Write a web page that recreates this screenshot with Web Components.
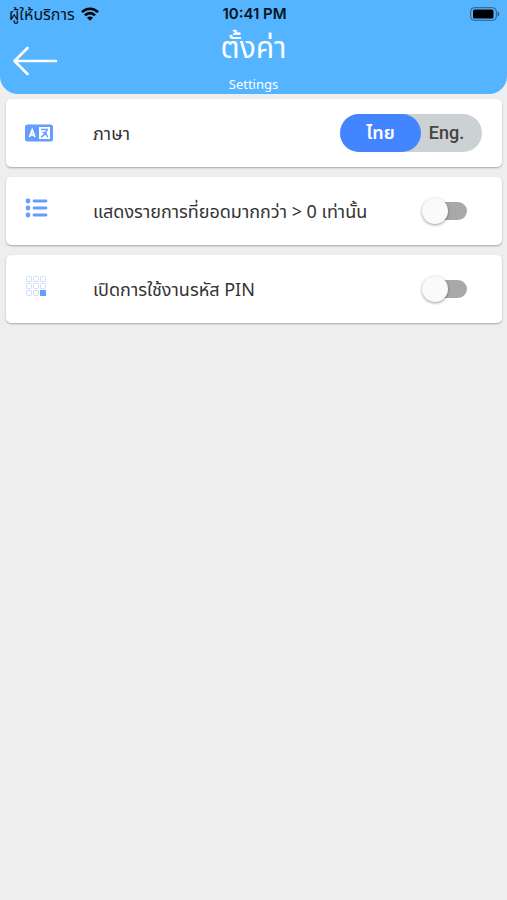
<!DOCTYPE html>
<html lang="th">
<head>
<meta charset="utf-8">
<meta name="viewport" content="width=device-width, initial-scale=1">
<title>ตั้งค่า</title>
<style>
html { background: #eee; }
body { margin: 0; font-family: "Noto Sans", "Noto Sans Thai", sans-serif; color: #333; }
</style>
</head>
<body>
<settings-page></settings-page>
<script>
const define = (name, html, setup) => {
  const template = document.createElement('template');
  template.innerHTML = html;
  customElements.define(name, class extends HTMLElement {
    constructor() {
      super();
      this.attachShadow({ mode: 'open' }).append(template.content.cloneNode(true));
    }
    connectedCallback() { if (setup) setup(this); }
  });
};

define('status-bar', `
<style>
:host { display: grid; grid-template-columns: 1fr auto 1fr; align-items: center; height: 28px; padding: 0 7px 0 9px; color: #07131c; font-size: 16px; line-height: 28px; }
.carrier { display: flex; align-items: center; gap: 6px; }
.time { font: 600 15px/28px Inter, sans-serif; }
.battery { justify-self: end; }
svg { display: block; }
</style>
<span class="carrier"><span>ผู้ให้บริการ</span>
<svg width="18" height="14" viewBox="0 0 18 14" fill="none" stroke="#000" stroke-width="2.6"><path d="M1 5.200C5.500.6 12.500.6 17 5.200M4 8.300c2.800-2.900 7.200-2.900 10 0"/><path d="M9 13.800 6 10.800c1.700-1.700 4.300-1.700 6 0z" fill="#000" stroke="none"/></svg></span>
<span class="time">10:41 PM</span>
<svg class="battery" width="30" height="14" viewBox="0 0 30 14"><rect x=".7" y=".7" width="25.600" height="12.600" rx="3.500" fill="none" stroke="#2b5d84" stroke-width="1"/><rect x="3" y="2.500" width="20.500" height="9" rx="1.500" fill="#000"/><path d="M27.500 4.500c2.500.8 2.500 4.200 0 5z" fill="#2b6593"/></svg>`);

define('app-header', `
<style>
:host { display: block; background: #54b4ff; border-radius: 0 0 18px 18px; color: #fff; }
.bar { display: grid; grid-template-columns: 60px 1fr 60px; height: 66px; }
button { align-self: center; margin: 0; padding: 0 0 0 12px; border: 0; background: none; }
svg { display: block; }
.titles { display: flex; flex-direction: column; align-items: center; gap: 8px; }
h1 { margin: 0; font-size: 30px; font-weight: 400; line-height: 38px; }
p { margin: 0; font-size: 13px; line-height: 20px; }
</style>
<status-bar></status-bar>
<div class="bar">
<button aria-label="Back"><svg width="46" height="30" viewBox="0 0 46 30" fill="none" stroke="#fff" stroke-width="2.600" stroke-linecap="round" stroke-linejoin="round"><path d="M15.500 2 2.500 15l13 13M2.500 15H44"/></svg></button>
<div class="titles"><h1><slot name="title"></slot></h1><p><slot name="subtitle"></slot></p></div>
</div>`);

define('setting-row', `
<style>
:host { display: grid; grid-template-columns: 68px 1fr auto; align-items: center; box-sizing: border-box; height: 68px; padding: 0 20px 0 19px; background: #fff; border-radius: 5px; box-shadow: 0 1px 2px rgba(0,0,0,.3); }
.label { font-size: 18px; line-height: 28px; white-space: nowrap; }
.icon { display: flex; }
</style>
<span class="icon"><slot name="icon"></slot></span>
<span class="label" id="label"><slot></slot></span>
<slot name="control"></slot>`);

define('toggle-switch', `
<style>
:host { display: flex; padding-right: 15px; }
input { appearance: none; position: relative; width: 46px; height: 28px; margin: 0; cursor: pointer; }
input::before { content: ""; position: absolute; inset: 5px 0 5px 8px; border-radius: 9px; background: #a8a8a8; }
input::after { content: ""; position: absolute; left: 1px; top: 1px; width: 26px; height: 26px; border-radius: 50%; background: #fafafa; box-shadow: 0 1px 3px rgba(0,0,0,.4); }
input:checked::before { background: #8fb6ff; }
input:checked::after { left: 20px; background: #4285ff; }
</style>
<input type="checkbox" role="switch">`,
el => el.shadowRoot.querySelector('input').setAttribute('aria-label', el.getAttribute('label')));

define('language-toggle', `
<style>
:host { display: block; }
fieldset { display: flex; width: 142px; height: 38px; margin: 0; padding: 0; border: 0; border-radius: 19px; background: #ccd1d3; }
input { appearance: none; position: absolute; margin: 0; }
label { display: flex; align-items: center; justify-content: center; flex: 1; padding-right: 10px; border-radius: 19px; color: #444; font-family: Roboto, "Noto Sans Thai", sans-serif; font-size: 18px; font-weight: 500; line-height: 38px; cursor: pointer; }
label:has(:checked) { flex: 0 0 81px; padding: 0; box-sizing: border-box; background: #4285ff; color: #fff; font-weight: 600; }
</style>
<fieldset aria-label="ภาษา">
<label><input type="radio" name="language" checked>ไทย</label>
<label><input type="radio" name="language">Eng.</label>
</fieldset>`);

define('setting-icon', `
<style>
:host { display: flex; }
svg { display: none; }
:host([name=language]) .language, :host([name=list]) .list, :host([name=pin]) .pin { display: block; }
:host([name=list]), :host([name=pin]) { padding-bottom: 6px; }
</style>
<svg class="language" width="28" height="18" viewBox="0 0 28 18"><rect width="28" height="17" y=".5" rx="2.500" fill="#659cff"/><path d="M14 3h11v12H14z" fill="#fff"/><path d="m4.500 13 2.700-7 2.700 7M5.500 10.800h3.500" fill="none" stroke="#fff" stroke-width="1.800"/><path d="M16 5.500h7M22 5.500c-.8 3.500-3 6-6 7.500M17.500 8.500h3c.500 2 1.500 3.500 2.500 4.500" fill="none" stroke="#659cff" stroke-width="1.500"/></svg>
<svg class="list" width="24" height="20" viewBox="0 0 24 20" fill="#659cff"><circle cx="3" cy="3" r="2.400"/><circle cx="3" cy="10" r="2.400"/><circle cx="3" cy="17" r="2.400"/><path d="M9 3h12M9 10h12M9 17h12" stroke="#659cff" stroke-width="2.800" stroke-linecap="round"/></svg>
<svg class="pin" width="22" height="22" viewBox="0 0 22 22" fill="none" stroke="#cbdcff"><rect x="1.500" y="1.500" width="5" height="5" rx="1"/><rect x="8.500" y="1.500" width="5" height="5" rx="1"/><rect x="15.500" y="1.500" width="5" height="5" rx="1"/><rect x="1.500" y="8.500" width="5" height="5" rx="1"/><rect x="8.500" y="8.500" width="5" height="5" rx="1"/><rect x="15.500" y="8.500" width="5" height="5" rx="1"/><rect x="1.500" y="15.500" width="5" height="5" rx="1"/><rect x="8.500" y="15.500" width="5" height="5" rx="1"/><rect x="15" y="15" width="6" height="6" rx=".5" fill="#659cff" stroke="none"/></svg>`);

define('settings-page', `
<style>
:host { display: block; min-height: 100vh; background: #eee; }
main { display: flex; flex-direction: column; gap: 10px; padding: 5px 5px 5px 6px; }
</style>
<app-header><span slot="title">ตั้งค่า</span><span slot="subtitle">Settings</span></app-header>
<main>
<setting-row><setting-icon slot="icon" name="language"></setting-icon>ภาษา<language-toggle slot="control"></language-toggle></setting-row>
<setting-row><setting-icon slot="icon" name="list"></setting-icon>แสดงรายการที่ยอดมากกว่า &gt; 0 เท่านั้น<toggle-switch slot="control" label="แสดงรายการที่ยอดมากกว่า &gt; 0 เท่านั้น"></toggle-switch></setting-row>
<setting-row><setting-icon slot="icon" name="pin"></setting-icon>เปิดการใช้งานรหัส PIN<toggle-switch slot="control" label="เปิดการใช้งานรหัส PIN"></toggle-switch></setting-row>
</main>`);
</script>
</body>
</html>
